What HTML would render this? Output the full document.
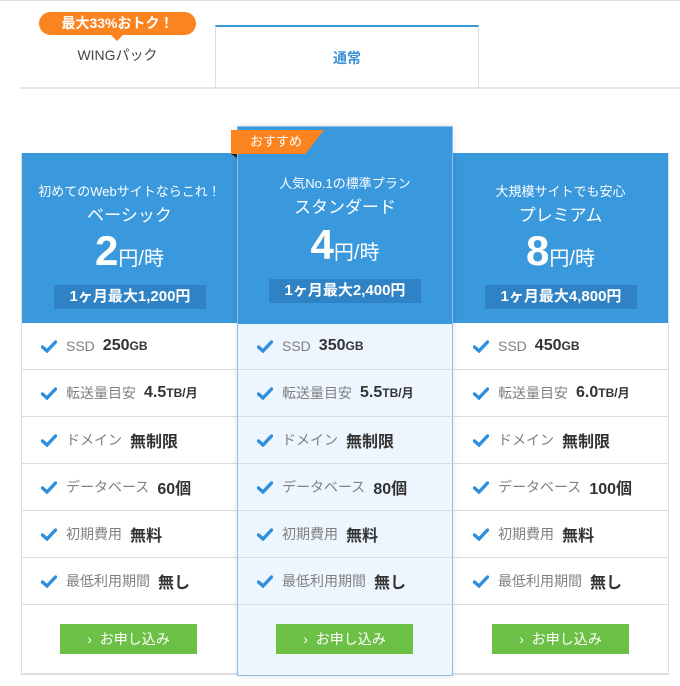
<!DOCTYPE html>
<html><head><meta charset="utf-8"><style>
*{margin:0;padding:0;box-sizing:border-box}
body{width:680px;height:686px;background:#fff;font-family:"Liberation Sans","Noto Sans CJK JP",sans-serif;position:relative;overflow:hidden}
.a{position:absolute}
.col{position:absolute;top:153px;width:216px;height:522px;background:#fff}
.head{position:absolute;left:0;top:0;width:100%;height:170px;background:#3a98dd;color:#fff;text-align:center}
.row{position:absolute;left:0;width:100%;height:47px;border-bottom:1px solid #dcdcdc;font-size:14px;color:#808080;display:flex;align-items:center;padding-left:19px}
.row svg{margin-right:9px}
.row b{color:#333;font-size:16px;margin-left:8px;font-weight:bold}
.row b small{font-size:12px}
.btn{position:absolute;left:39px;width:137px;height:30px;background:#6cc046;color:#fff;font-size:14px;text-align:center;line-height:30px}
.sub{position:absolute;width:100%;font-size:13px}
.nm{position:absolute;width:100%;font-size:17px}
.pr{position:absolute;width:100%;font-size:20px}
.pr span{font-size:42px;font-weight:bold}
.box{position:absolute;left:32px;width:152px;height:24px;background:#2f82c4;font-size:15px;font-weight:bold;line-height:24px}
</style></head><body>
<div class="a" style="left:0;top:0;width:680px;height:1px;background:#ddd"></div>
<div class="a" style="left:20px;top:87px;width:660px;height:2px;background:#e6e6e6"></div>
<div class="a" style="left:215px;top:25px;width:264px;height:63px;border:1px solid #ddd;border-top:2px solid #3a98dd;border-bottom:none;color:#3a8fd6;font-size:14px;text-align:center;line-height:62px;font-weight:bold">通常</div>
<div class="a" style="left:20px;top:40px;width:195px;text-align:center;font-size:14px;color:#444;line-height:30px">WINGパック</div>
<div class="a" style="left:39px;top:12px;width:157px;height:23px;background:#fb8421;border-radius:12px;color:#fff;font-weight:bold;font-size:14px;text-align:center;line-height:23px">最大33%おトク！</div>
<div class="a" style="left:111px;top:35px;width:0;height:0;border-left:6px solid transparent;border-right:6px solid transparent;border-top:6px solid #fb8421"></div>

<div class="a" style="left:21px;top:153px;width:648px;height:522px;border:1px solid #ddd;border-top:none"></div>

<div class="col" style="left:21px;border-left:1px solid #ddd;border-bottom:2px solid #ddd">
<div class="head"><div class="sub" style="top:28px">初めてのWebサイトならこれ！</div><div class="nm" style="top:48px">ベーシック</div><div class="pr" style="top:74px"><span>2</span>円/時</div><div class="box" style="top:132px">1ヶ月最大1,200円</div></div>
</div>
<div class="col" style="left:453px;border-right:1px solid #ddd;border-bottom:2px solid #ddd">
<div class="head"><div class="sub" style="top:28px">大規模サイトでも安心</div><div class="nm" style="top:48px">プレミアム</div><div class="pr" style="top:74px"><span>8</span>円/時</div><div class="box" style="top:132px">1ヶ月最大4,800円</div></div>
</div>
<div class="col" style="left:237px;top:126px;height:550px;background:#edf6fe;border:1px solid #8cc0ea;box-shadow:0 0 6px rgba(0,0,0,.12);z-index:2">
<div class="head" style="height:197px"><div class="sub" style="top:46px">人気No.1の標準プラン</div><div class="nm" style="top:66px">スタンダード</div><div class="pr" style="top:94px"><span>4</span>円/時</div><div class="box" style="top:152px;left:31px">1ヶ月最大2,400円</div></div>
</div>
<div class="a" style="left:231px;top:130px;width:93px;height:24px;background:#fb8421;clip-path:polygon(0 0,100% 0,80% 100%,0 100%);color:#fff;font-size:13px;line-height:24px;padding-left:19px;z-index:3">おすすめ</div>
<div class="a" style="left:231px;top:154px;width:0;height:0;border-left:6px solid transparent;border-top:4px solid #222;z-index:3"></div>

<div id="rows"></div>
<script>
var data=[["SSD",["250<small>GB</small>","350<small>GB</small>","450<small>GB</small>"]],["転送量目安",["4.5<small>TB/月</small>","5.5<small>TB/月</small>","6.0<small>TB/月</small>"]],["ドメイン",["無制限","無制限","無制限"]],["データベース",["60個","80個","100個"]],["初期費用",["無料","無料","無料"]],["最低利用期間",["無し","無し","無し"]]];
var xs=[21,237,453],h="";
var chk='<svg width="16" height="13" viewBox="0 0 16 13"><path d="M1.5 7L6 11L14.5 2" stroke="#2f8fdc" stroke-width="3.4" fill="none" stroke-linecap="round"/></svg>';
for(var c=0;c<3;c++){for(var r=0;r<6;r++){h+='<div class="row" style="position:absolute;left:'+(xs[c]+1)+'px;width:'+(c==1?214:215)+'px;top:'+(323+r*47)+'px;z-index:'+(c==1?4:1)+'">'+chk+data[r][0]+'<b>'+data[r][1][c]+'</b></div>';}
h+='<div class="btn" style="left:'+(xs[c]+39)+'px;top:624px;z-index:5">›&nbsp; お申し込み</div>';}
document.getElementById('rows').innerHTML=h;
</script>
</body></html>
